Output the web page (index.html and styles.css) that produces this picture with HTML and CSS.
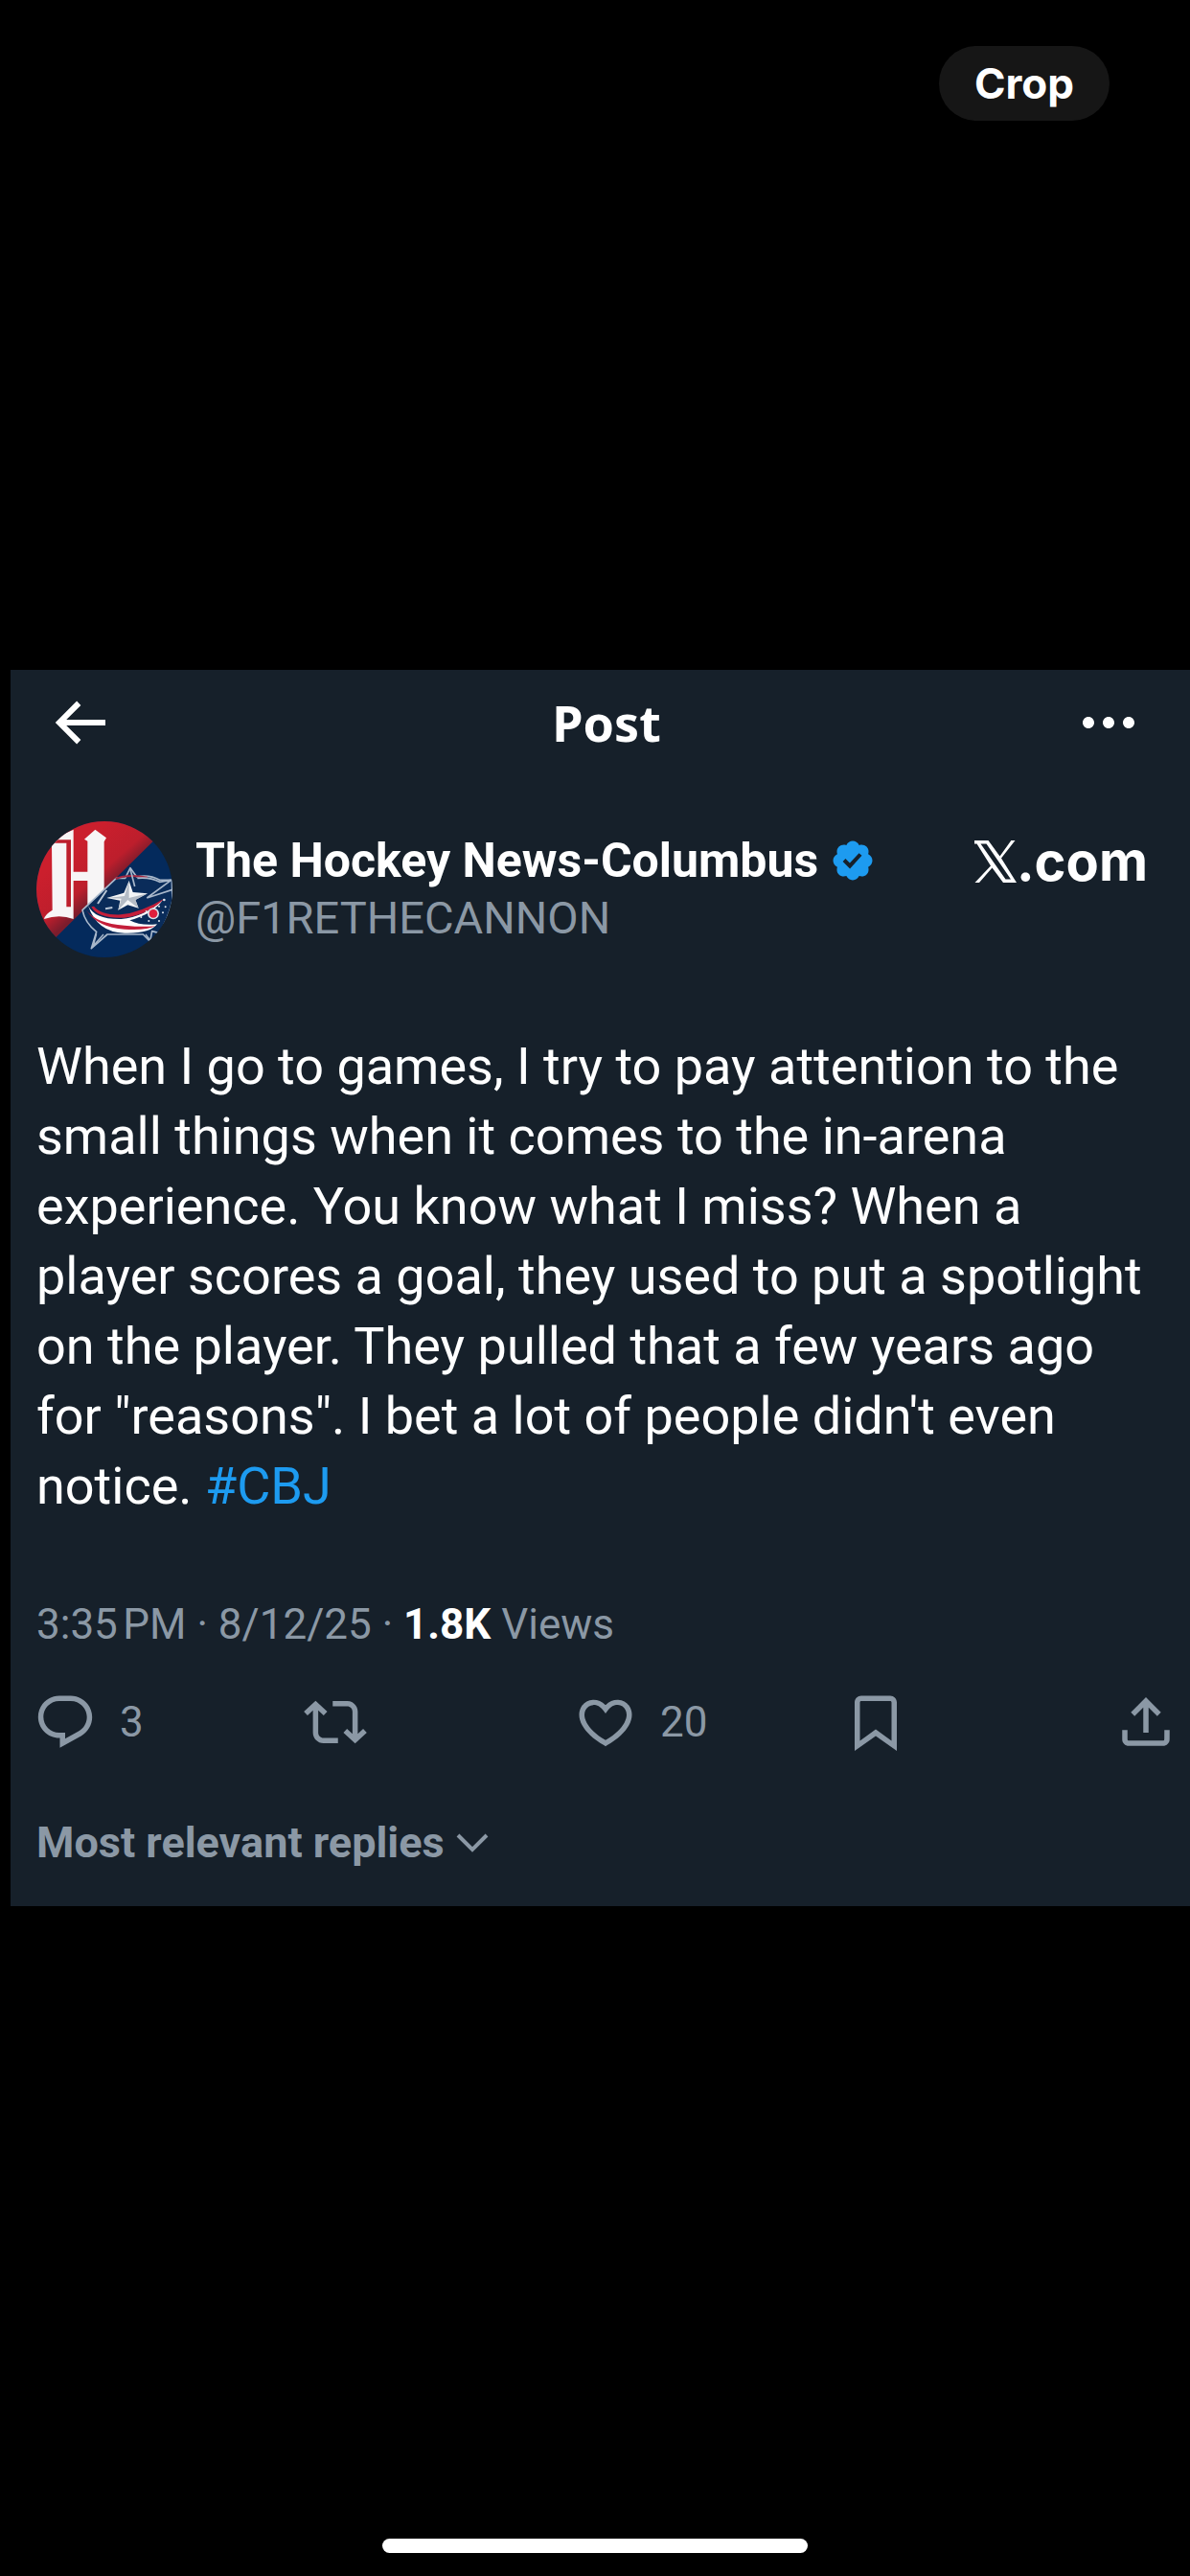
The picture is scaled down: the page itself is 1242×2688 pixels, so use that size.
FILE: index.html
```html
<!DOCTYPE html>
<html lang="en">
<head>
<meta charset="utf-8">
<meta name="viewport" content="width=device-width, initial-scale=1">
<title>Post</title>
<link rel="stylesheet" href="styles.css">
</head>
<body>
<div class="viewer">
  <div class="viewer-top">
    <button class="crop-button" type="button">Crop</button>
  </div>

  <main class="post">
    <header class="post-header">
      <button class="icon-button" type="button" aria-label="Back">
        <svg class="icon-large" viewBox="0 0 24 24" aria-hidden="true"><path d="M7.414 13l5.043 5.04-1.414 1.42L3.586 12l7.457-7.46 1.414 1.42L7.414 11H21v2H7.414z"/></svg>
      </button>
      <h1 class="post-title">Post</h1>
      <button class="icon-button" type="button" aria-label="More">
        <svg class="icon-large" viewBox="0 0 24 24" aria-hidden="true"><path d="M3 12c0-1.1.9-2 2-2s2 .9 2 2-.9 2-2 2-2-.9-2-2zm9 2c1.1 0 2-.9 2-2s-.9-2-2-2-2 .9-2 2 .9 2 2 2zm7 0c1.1 0 2-.9 2-2s-.9-2-2-2-2 .9-2 2 .9 2 2 2z"/></svg>
      </button>
    </header>

    <section class="author">
      <svg class="avatar" viewBox="24 22 426 426" role="img" aria-label="The Hockey News-Columbus">
        <defs>
          <clipPath id="avatar-clip"><circle cx="237" cy="235" r="213"/></clipPath>
          <linearGradient id="red-shade" gradientUnits="userSpaceOnUse" x1="130" y1="110" x2="240" y2="235">
            <stop offset="0" stop-color="#cb1f2d"/><stop offset=".7" stop-color="#bd1e2c"/><stop offset="1" stop-color="#7c1c2c"/>
          </linearGradient>
        </defs>
        <g clip-path="url(#avatar-clip)">
          <rect x="20" y="20" width="440" height="440" fill="#042a5c"/>
          <path d="M20 20H460L386 88L86 384L20 440Z" fill="url(#red-shade)"/>
          <!-- blackletter H emblem -->
          <path d="M72 92L100 66L140 48V180H184V84L174 78L208 48L243 74L236 86V250L206 290L184 282V208H140V328Q96 312 48 328Q50 314 74 300Z" fill="#f7f5f6"/>
          <path d="M80 80H132V290H118V90H80Z" fill="#bd1e2c"/>
          <!-- flag star crest -->
          <path d="M168 300L232 240L274 200L302 200L318 168L338 196Q378 188 410 206L448 206L450 270Q436 330 408 372L386 366L380 398L358 376H246L196 420L212 368Q176 340 168 300Z" fill="#0a2c5a" stroke="#a9b8cb" stroke-width="5" stroke-linejoin="round"/>
          <path d="M272 202Q310 186 372 198" fill="none" stroke="#a32741" stroke-width="6"/>
          <path d="M340 200Q380 196 410 212L446 206L370 262L450 236" fill="none" stroke="#a9b8cb" stroke-width="5"/>
          <path d="M318 172L332 226" fill="none" stroke="#a9b8cb" stroke-width="5"/>
          <path d="M186 286Q206 330 290 328Q360 322 420 268Q390 312 316 332Q350 350 402 344Q380 374 300 372Q214 370 186 286Z" fill="#fff"/>
          <path d="M204 288Q226 316 288 314Q350 308 424 264Q376 314 300 324Q216 328 196 290Z" fill="#c41f3a"/>
          <path d="M180 300Q212 342 300 348Q356 354 396 350Q370 364 300 360Q216 354 180 300Z" fill="#c41f3a"/>
          <path d="M314 208L326 244L372 248L334 268L344 294L310 284L280 300L286 270L244 262L298 246Z" fill="#f3f5f7"/>
          <path d="M314 208V262L372 248L334 268L344 294L310 268L280 300L290 264L244 262L300 256Z" fill="#b4bcc6"/>
          <path d="M244 238L216 280M262 292L240 296" fill="none" stroke="#b7c4d4" stroke-width="6"/>
          <circle cx="390" cy="311" r="18" fill="#d9dfe8"/><circle cx="390" cy="311" r="13" fill="#e11f3c"/>
          <g fill="#dfe6ee">
            <circle cx="424" cy="268" r="4"/><circle cx="408" cy="288" r="3"/><circle cx="420" cy="308" r="3"/><circle cx="368" cy="304" r="3"/><circle cx="352" cy="322" r="3"/><circle cx="376" cy="334" r="3"/><circle cx="408" cy="334" r="3"/><circle cx="428" cy="290" r="3"/>
          </g>
          <path d="M212 374L202 412L234 376M366 376L380 394" fill="none" stroke="#a9b8cb" stroke-width="4"/>
        </g>
      </svg>
      <div class="identity">
        <div class="name-row">
          <span class="name">The Hockey News-Columbus</span>
          <svg class="badge" viewBox="0 0 24 24" role="img" aria-label="Verified account"><path d="M22.25 12c0-1.43-.88-2.67-2.19-3.34.46-1.39.2-2.9-.81-3.91s-2.52-1.27-3.91-.81c-.66-1.31-1.91-2.19-3.34-2.19s-2.67.88-3.33 2.19c-1.4-.46-2.91-.2-3.92.81s-1.26 2.52-.8 3.91c-1.31.67-2.2 1.91-2.2 3.34s.89 2.67 2.2 3.34c-.46 1.39-.21 2.9.8 3.91s2.52 1.26 3.91.81c.67 1.31 1.91 2.19 3.34 2.19s2.68-.88 3.34-2.19c1.39.45 2.9.2 3.91-.81s1.27-2.52.81-3.91c1.31-.67 2.19-1.91 2.19-3.34zm-11.71 4.2L6.8 12.46l1.41-1.42 2.26 2.26 4.8-5.23 1.47 1.36-6.2 6.77z"/></svg>
        </div>
        <div class="handle">@F1RETHECANNON</div>
      </div>
      <div class="brand">
        <svg class="brand-logo" viewBox="0 0 44 44" role="img" aria-label="X"><path fill-rule="evenodd" d="M0 0H14.500L26.500 16.500L38 0.500V0H42.500L28 18.500L44 44H30L18.500 28.500L5 44H0.500L17 26.500L2.500 3.500H0ZM6.500 3.500L32.500 40.500H38L12.500 3.500Z"/></svg>
        <span>.com</span>
      </div>
    </section>

    <p class="post-text">When I go to games, I try to pay attention to the small things when it comes to the in-arena experience. You know what I miss? When a player scores a goal, they used to put a spotlight on the player. They pulled that a few years ago for "reasons". I bet a lot of people didn't even notice. <a class="hashtag" href="#cbj">#CBJ</a></p>

    <p class="meta">3:35&#8239;PM · 8/12/25 · <strong class="views">1.8K</strong> Views</p>

    <div class="actions">
      <button class="action" type="button" aria-label="3 replies">
        <svg class="icon" viewBox="0 0 24 24" aria-hidden="true"><path d="M1.751 10c0-4.42 3.584-8 8.005-8h4.366c4.49 0 8.129 3.64 8.129 8.13 0 2.96-1.607 5.68-4.196 7.11l-8.054 4.46v-3.69h-.067c-4.49.1-8.183-3.51-8.183-8.01zm8.005-6c-3.317 0-6.005 2.69-6.005 6 0 3.37 2.77 6.08 6.138 6.01l.351-.01h1.761v2.3l5.087-2.81c1.951-1.08 3.163-3.13 3.163-5.36 0-3.39-2.744-6.13-6.129-6.13H9.756z"/></svg>
        <span>3</span>
      </button>
      <button class="action" type="button" aria-label="Repost">
        <svg class="icon" viewBox="0 0 24 24" aria-hidden="true"><path d="M4.5 3.88l4.432 4.14-1.364 1.46L5.5 7.55V16c0 1.1.896 2 2 2H13v2H7.5c-2.209 0-4-1.79-4-4V7.55L1.432 9.48.068 8.02 4.5 3.88zM16.5 6H11V4h5.5c2.209 0 4 1.79 4 4v8.45l2.068-1.93 1.364 1.46-4.432 4.14-4.432-4.14 1.364-1.46 2.068 1.93V8c0-1.1-.896-2-2-2z"/></svg>
      </button>
      <button class="action" type="button" aria-label="20 likes">
        <svg class="icon" viewBox="0 0 24 24" aria-hidden="true"><path d="M16.697 5.5c-1.222-.06-2.679.51-3.89 2.16l-.805 1.09-.806-1.09C9.984 6.01 8.526 5.44 7.304 5.5c-1.243.07-2.349.78-2.91 1.91-.552 1.12-.633 2.78.479 4.82 1.074 1.97 3.257 4.27 7.129 6.61 3.87-2.34 6.052-4.64 7.126-6.61 1.111-2.04 1.03-3.7.477-4.82-.561-1.13-1.666-1.84-2.908-1.91zm4.187 7.69c-1.351 2.48-4.001 5.12-8.379 7.67l-.503.3-.504-.3c-4.379-2.55-7.029-5.19-8.382-7.67-1.36-2.5-1.41-4.86-.514-6.67.887-1.79 2.647-2.91 4.601-3.01 1.651-.09 3.368.56 4.798 2.01 1.429-1.45 3.146-2.1 4.796-2.01 1.954.1 3.714 1.22 4.601 3.01.896 1.81.846 4.17-.514 6.67z"/></svg>
        <span>20</span>
      </button>
      <button class="action" type="button" aria-label="Bookmark">
        <svg class="icon" viewBox="0 0 24 24" aria-hidden="true"><path d="M4 4.500C4 3.120 5.119 2 6.500 2h11C18.881 2 20 3.120 20 4.500v18.440l-8-5.710-8 5.710V4.500zM6.500 4c-.276 0-.5.22-.5.5v14.560l6-4.290 6 4.290V4.500c0-.28-.224-.5-.5-.5h-11z"/></svg>
      </button>
      <button class="action" type="button" aria-label="Share">
        <svg class="icon" viewBox="0 0 24 24" aria-hidden="true"><path d="M12 2.590l5.700 5.700-1.410 1.420L13 6.410V16h-2V6.410l-3.300 3.300-1.410-1.420L12 2.590zM21 15l-.02 3.510c0 1.380-1.120 2.490-2.500 2.490H5.500C4.110 21 3 19.880 3 18.500V15h2v3.500c0 .28.220.5.5.5h12.980c.28 0 .5-.22.5-.5L19 15h2z"/></svg>
      </button>
    </div>

    <button class="sort" type="button">
      <span>Most relevant replies</span>
      <svg class="chevron" viewBox="0 0 34 20" aria-hidden="true"><path d="M2 2L17 17L32 2"/></svg>
    </button>
  </main>

  <div class="viewer-bottom">
    <div class="home-indicator"></div>
  </div>
</div>
</body>
</html>
```

FILE: styles.css
```css
* {
  box-sizing: border-box;
}

body {
  margin: 0;
  background: #000;
  color: #fff;
  font-family: Roboto, "Liberation Sans", sans-serif;
}

h1,
p {
  margin: 0;
}

button {
  padding: 0;
  border: 0;
  background: none;
  color: inherit;
  font: inherit;
  text-align: left;
  cursor: pointer;
}

svg {
  display: block;
  flex: none;
  fill: currentColor;
}

.viewer {
  display: grid;
  grid-template-rows: 1fr auto 1fr;
  min-height: 100vh;
}

.viewer-top {
  display: flex;
  justify-content: flex-end;
  align-items: flex-start;
  padding: 48px 84px;
}

.crop-button {
  padding: 9px 37px;
  border-radius: 40px;
  background: #161616;
  font: 700 44px/60px Inter, "Liberation Sans", sans-serif;
}

.post {
  display: flex;
  flex-direction: column;
  margin-left: 11px;
  padding: 0 40px 36px 27px;
  background: #16202a;
}

.post-header {
  display: flex;
  align-items: center;
  height: 110px;
  margin: 0 9px;
}

.icon-large {
  width: 72px;
  height: 72px;
}

.post-title {
  flex: 1;
  padding-left: 26px;
  font: 700 52px/60px "Noto Sans", sans-serif;
  text-align: center;
}

.author {
  display: flex;
  align-items: center;
  margin-top: 48px;
}

.avatar {
  width: 142px;
  height: 142px;
}

.identity {
  flex: 1;
  margin-left: 24px;
  line-height: 60px;
}

.name-row {
  display: flex;
  align-items: center;
  gap: 12px;
}

.name {
  font-size: 50px;
  font-weight: 700;
}

.badge {
  width: 48px;
  height: 48px;
  fill: #1d9bf0;
}

.handle {
  color: #8b98a5;
  font-size: 47px;
}

.brand {
  display: flex;
  align-items: center;
  align-self: flex-start;
  margin: 12px 4px 0 0;
  font: 700 56px/60px Inter, "Liberation Sans", sans-serif;
}

.brand-logo {
  width: 44px;
  height: 44px;
}

.post-text {
  margin-top: 77px;
  font-size: 54px;
  line-height: 73px;
}

.hashtag {
  color: #1d9bf0;
  text-decoration: none;
}

.meta {
  margin-top: 78px;
  color: #8b98a5;
  font-size: 44px;
  line-height: 60px;
}

.views {
  color: #fff;
}

.actions {
  display: grid;
  grid-template-columns: repeat(4, 1fr) 66px;
  margin: 39px -27px 0 -3px;
  color: #8b98a5;
}

.action {
  display: flex;
  align-items: center;
  gap: 24px;
  font-size: 44px;
}

.icon {
  width: 66px;
  height: 66px;
}

.sort {
  display: flex;
  align-items: center;
  align-self: flex-start;
  gap: 12px;
  margin-top: 63px;
  color: #8b98a5;
  font-size: 45px;
  font-weight: 700;
  line-height: 60px;
}

.chevron {
  width: 34px;
  height: 20px;
  fill: none;
  stroke: currentColor;
  stroke-width: 4;
}

.viewer-bottom {
  display: flex;
  justify-content: center;
  align-items: flex-end;
  padding-bottom: 24px;
}

.home-indicator {
  width: 444px;
  height: 15px;
  border-radius: 8px;
  background: #fff;
}
```
